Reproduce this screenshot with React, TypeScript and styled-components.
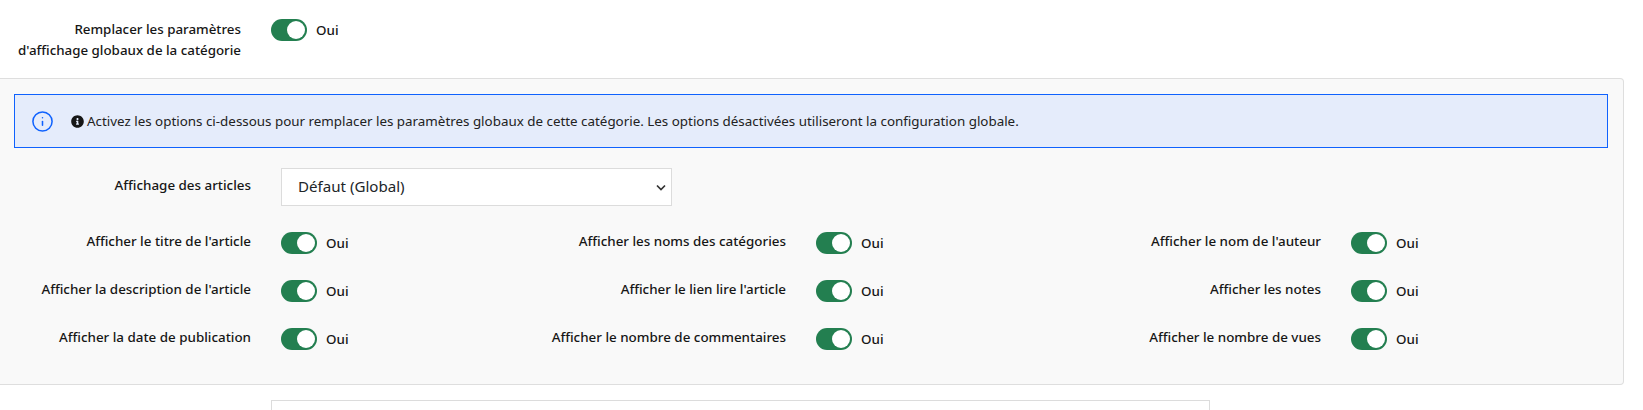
import React from 'react';
import styled, { createGlobalStyle } from 'styled-components';
import { Info } from 'lucide-react';
import { FaInfoCircle } from 'react-icons/fa';

const Global = createGlobalStyle`
  html, body { margin: 0; padding: 0; background: #fff; }
  body { font-family: "Noto Sans", "Liberation Sans", sans-serif; font-size: 13.4px; color: #161616; overflow: hidden; }
`;

const Page = styled.div`
  width: 1643px;
  height: 410px;
  overflow: hidden;
`;
const TopRow = styled.div`
  display: flex;
  align-items: flex-start;
  gap: 30px;
  height: 78px;
  padding: 19px 0 0 4px;
  box-sizing: border-box;
`;
const TopLabel = styled.label`
  width: 237px;
  text-align: right;
  font-weight: 500;
  font-size: 13.35px;
  line-height: 20.5px;
`;
const Panel = styled.div`
  width: 1624px;
  height: 307px;
  box-sizing: border-box;
  background: #f9f9f9;
  border: 1px solid #dedede;
  border-left: 0;
  border-radius: 0 4px 4px 0;
  padding: 15px 14px 0 14px;
`;
const Alert = styled.div`
  height: 54px;
  width: 1594px;
  box-sizing: border-box;
  display: flex;
  align-items: center;
  background: #e5ecfb;
  border: 1px solid #0f62fe;
  padding-left: 16px;
  font-size: 13.38px;
  color: #222;
`;
const AlertIcon = styled(Info)`
  width: 23px;
  height: 23px;
  color: #0f62fe;
  margin-right: 17px;
  flex: none;
`;
const InlineIcon = styled(FaInfoCircle)`
  width: 13px;
  height: 13px;
  margin-right: 3px;
  color: #161616;
  flex: none;
`;
const SelectRow = styled.div`
  display: flex;
  align-items: center;
  gap: 30px;
  margin-top: 20px;
`;
const FieldLabel = styled.label`
  width: 237px;
  flex: none;
  text-align: right;
  font-weight: 500;
  line-height: 19px;
`;
const SelectLabel = styled(FieldLabel)`
  margin-bottom: 4px;
`;
const Select = styled.select`
  width: 391px;
  height: 38px;
  box-sizing: border-box;
  appearance: none;
  border: 1px solid #dcdcdc;
  background: #fff url("data:image/svg+xml,%3Csvg xmlns='http://www.w3.org/2000/svg' width='10' height='7' viewBox='0 0 10 7'%3E%3Cpath d='M1 1.5l4 4 4-4' fill='none' stroke='%23333' stroke-width='1.7'/%3E%3C/svg%3E") no-repeat right 5px center;
  padding: 0 12px 2px 16px;
  font-family: inherit;
  font-size: 15.1px;
  color: #212529;
  border-radius: 0;
`;
const Grid = styled.div`
  display: grid;
  grid-template-columns: repeat(3, 535px);
  grid-auto-rows: 48px;
  margin-top: 26px;
`;
const Field = styled.div`
  display: flex;
  align-items: flex-start;
  gap: 30px;
`;
const SwitchWrap = styled.div`
  display: flex;
  align-items: center;
  gap: 9px;
  height: 22px;
  flex: none;
`;
const Track = styled.span`
  position: relative;
  display: block;
  width: 36px;
  height: 22px;
  border-radius: 11px;
  background: #237f50;
`;
const Knob = styled.span`
  position: absolute;
  top: 2px;
  right: 2px;
  width: 18px;
  height: 18px;
  border-radius: 50%;
  background: #fff;
`;
const Value = styled.span`
  font-weight: 500;
  font-size: 13.4px;
`;
const Lower = styled.div`
  width: 939px;
  height: 30px;
  box-sizing: border-box;
  margin: 15px 0 0 271px;
  border: 1px solid #dcdcdc;
  border-bottom: 0;
`;

const Toggle = () => (
  <SwitchWrap>
    <Track><Knob /></Track>
    <Value>Oui</Value>
  </SwitchWrap>
);

const fields = [
  "Afficher le titre de l'article",
  'Afficher les noms des catégories',
  "Afficher le nom de l'auteur",
  "Afficher la description de l'article",
  "Afficher le lien lire l'article",
  'Afficher les notes',
  'Afficher la date de publication',
  'Afficher le nombre de commentaires',
  'Afficher le nombre de vues',
];

export default function App() {
  return (
    <Page>
      <Global />
      <TopRow>
        <TopLabel>Remplacer les paramètres d'affichage globaux de la catégorie</TopLabel>
        <Toggle />
      </TopRow>
      <Panel>
        <Alert>
          <AlertIcon strokeWidth={1.6} />
          <InlineIcon />
          Activez les options ci-dessous pour remplacer les paramètres globaux de cette catégorie. Les options désactivées utiliseront la configuration globale.
        </Alert>
        <SelectRow>
          <SelectLabel>Affichage des articles</SelectLabel>
          <Select defaultValue="d"><option value="d">Défaut (Global)</option></Select>
        </SelectRow>
        <Grid>
          {fields.map((f) => (
            <Field key={f}>
              <FieldLabel>{f}</FieldLabel>
              <Toggle />
            </Field>
          ))}
        </Grid>
      </Panel>
      <Lower />
    </Page>
  );
}
